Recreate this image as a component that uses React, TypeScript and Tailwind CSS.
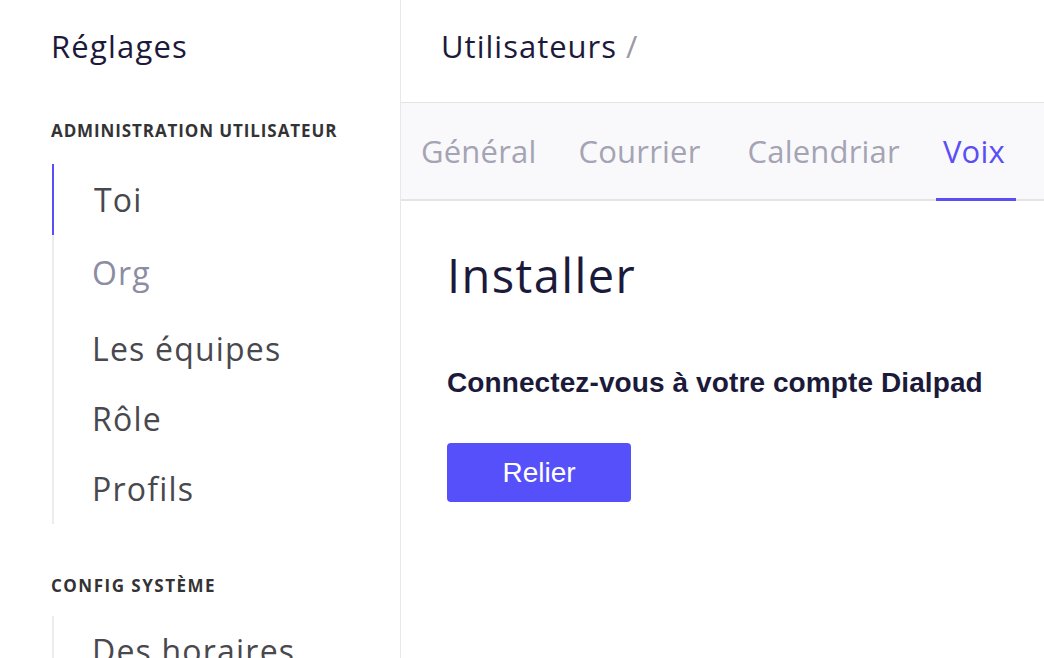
import React from "react";

const rounded = { fontFamily: "'Open Sans', Lato, sans-serif" };
const arial = { fontFamily: "'Liberation Sans', Arial, sans-serif" };

export default function App() {
  return (
    <div className="flex h-[658px] w-[1044px] overflow-hidden bg-white" style={rounded}>
      <aside className="w-[401px] shrink-0 border-r border-[#e8e8ec] pl-[51px]">
        <div className="flex h-[92px] items-center">
          <h1 className="text-[31px] leading-none tracking-[1.2px] text-[#1c1a3a]">Réglages</h1>
        </div>
        <div className="flex h-[72px] items-center pt-[6px]">
          <span className="text-[17px] font-bold tracking-[0.9px] text-[#333336]">ADMINISTRATION UTILISATEUR</span>
        </div>
        <nav className="ml-[1px] flex flex-col border-l-2 border-[#ececef] text-[32px] tracking-[1.2px] text-[#48484e]">
          <div className="-ml-[2px] flex h-[71px] items-center border-l-2 border-[#5a4ff5] pl-[40px]">Toi</div>
          <div className="mt-[3px] flex h-[70px] items-center pl-[38px] text-[#8c8ca2]">Org</div>
          <div className="mt-[6px] flex h-[70px] items-center pl-[38px]">Les équipes</div>
          <div className="flex h-[70px] items-center pl-[38px]">Rôle</div>
          <div className="flex h-[70px] items-center pl-[38px]">Profils</div>
        </nav>
        <div className="flex h-[92px] items-center pt-[32px]">
          <span className="text-[17px] font-bold tracking-[1.5px] text-[#333336]">CONFIG SYSTÈME</span>
        </div>
        <nav className="ml-[1px] border-l-2 border-[#ececef] text-[32px] tracking-[1.2px] text-[#48484e]">
          <div className="flex h-[70px] items-center pl-[38px]">Des horaires</div>
        </nav>
      </aside>
      <main className="flex-1">
        <header className="flex h-[103px] items-center border-b border-[#e4e4e8] pb-[9px] pl-[40px]">
          <span className="text-[31px] tracking-[1px] text-[#1c1a3a]">Utilisateurs</span>
          <span className="ml-[9px] text-[31px] text-[#9a9aa6]">/</span>
        </header>
        <div className="flex h-[98px] items-stretch border-b-2 border-[#e4e4e8] bg-[#f9f9fb] pl-[20px] text-[31px] tracking-[0.2px] text-[#a4a4b4]">
          <div className="flex items-center">Général</div>
          <div className="ml-[42px] flex items-center">Courrier</div>
          <div className="ml-[47px] flex items-center">Calendriar</div>
          <div className="relative ml-[36px] flex items-center px-[7px] text-[#5a4ff5]">
            Voix
            <span className="absolute bottom-[-2px] left-0 h-[3px] w-[80px] bg-[#5a4ff5]" />
          </div>
        </div>
        <section className="pl-[46px]">
          <h2 className="mt-[51px] text-[47px] leading-none tracking-[1.4px] text-[#1c1a3a]">Installer</h2>
          <p className="mt-[70px] text-[28px] font-bold leading-none tracking-[0.1px] text-[#1c1a3a]" style={arial}>
            Connectez-vous à votre compte Dialpad
          </p>
          <button
            className="mt-[46px] flex h-[59px] w-[184px] items-center justify-center rounded-[4px] bg-[#5650fa] text-[28px] text-white"
            style={arial}
          >
            Relier
          </button>
        </section>
      </main>
    </div>
  );
}
